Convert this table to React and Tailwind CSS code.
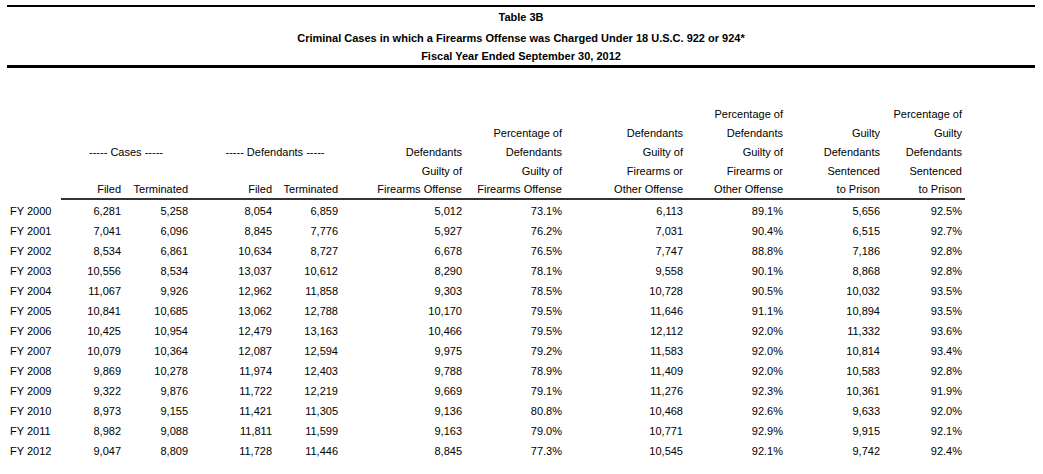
const W = [
  "w-[54px]",
  "w-[63px]",
  "w-[67px]",
  "w-[84px]",
  "w-[66px]",
  "w-[124px]",
  "w-[100px]",
  "w-[121px]",
  "w-[100px]",
  "w-[97px]",
  "w-[82px]",
];

// header stacks, top to bottom; row 3 has the spanning group labels and is drawn on its own
const HEAD_ROWS = [
  ["", "", "", "", "", "", "", "", "Percentage of", "", "Percentage of"],
  ["", "", "", "", "", "", "Percentage of", "Defendants", "Defendants", "Guilty", "Guilty"],
  null,
  ["", "", "", "", "", "Guilty of", "Guilty of", "Firearms or", "Firearms or", "Sentenced", "Sentenced"],
];

const LAST_HEAD = [
  "Filed",
  "Terminated",
  "Filed",
  "Terminated",
  "Firearms Offense",
  "Firearms Offense",
  "Other Offense",
  "Other Offense",
  "to Prison",
  "to Prison",
];

const ROWS = [
  ["FY 2000", "6,281", "5,258", "8,054", "6,859", "5,012", "73.1%", "6,113", "89.1%", "5,656", "92.5%"],
  ["FY 2001", "7,041", "6,096", "8,845", "7,776", "5,927", "76.2%", "7,031", "90.4%", "6,515", "92.7%"],
  ["FY 2002", "8,534", "6,861", "10,634", "8,727", "6,678", "76.5%", "7,747", "88.8%", "7,186", "92.8%"],
  ["FY 2003", "10,556", "8,534", "13,037", "10,612", "8,290", "78.1%", "9,558", "90.1%", "8,868", "92.8%"],
  ["FY 2004", "11,067", "9,926", "12,962", "11,858", "9,303", "78.5%", "10,728", "90.5%", "10,032", "93.5%"],
  ["FY 2005", "10,841", "10,685", "13,062", "12,788", "10,170", "79.5%", "11,646", "91.1%", "10,894", "93.5%"],
  ["FY 2006", "10,425", "10,954", "12,479", "13,163", "10,466", "79.5%", "12,112", "92.0%", "11,332", "93.6%"],
  ["FY 2007", "10,079", "10,364", "12,087", "12,594", "9,975", "79.2%", "11,583", "92.0%", "10,814", "93.4%"],
  ["FY 2008", "9,869", "10,278", "11,974", "12,403", "9,788", "78.9%", "11,409", "92.0%", "10,583", "92.8%"],
  ["FY 2009", "9,322", "9,876", "11,722", "12,219", "9,669", "79.1%", "11,276", "92.3%", "10,361", "91.9%"],
  ["FY 2010", "8,973", "9,155", "11,421", "11,305", "9,136", "80.8%", "10,468", "92.6%", "9,633", "92.0%"],
  ["FY 2011", "8,982", "9,088", "11,811", "11,599", "9,163", "79.0%", "10,771", "92.9%", "9,915", "92.1%"],
  ["FY 2012", "9,047", "8,809", "11,728", "11,446", "8,845", "77.3%", "10,545", "92.1%", "9,742", "92.4%"],
];

function Cell({ i, children }) {
  return (
    <div
      className={`${W[i]} shrink-0 whitespace-nowrap ${i === 0 ? "text-left pl-[3px]" : "text-right pr-[3px]"}`}
    >
      {children}
    </div>
  );
}

export default function App() {
  return (
    <div className="min-h-screen bg-white pl-[7px] pt-[5px] font-['Liberation_Sans',Arial,sans-serif] text-[11px] text-black antialiased">
      <div className="w-[1028px]">
        {/* Title block between the two heavy rules */}
        <div className="border-t-2 border-b-[3px] border-black font-bold text-center">
          <div className="h-[21px] leading-[21px]">Table 3B</div>
          <div className="h-[20px] leading-[20px]">
            Criminal Cases in which a Firearms Offense was Charged Under 18 U.S.C. 922 or 924*
          </div>
          <div className="h-[17px] leading-[17px]">Fiscal Year Ended September 30, 2012</div>
        </div>

        {/* Column headers */}
        <div className="mt-[37px]">
          {HEAD_ROWS.map((row, r) =>
            row ? (
              <div key={r} className="flex h-[19px] leading-[19px]">
                {row.map((t, i) => (
                  <Cell key={i} i={i}>
                    {t}
                  </Cell>
                ))}
              </div>
            ) : (
              <div key={r} className="flex h-[19px] leading-[19px]">
                <Cell i={0} />
                <div className="w-[130px] shrink-0 text-center whitespace-nowrap">----- Cases -----</div>
                <div className="w-[150px] shrink-0 pl-[18px] text-center whitespace-nowrap">
                  ----- Defendants -----
                </div>
                <Cell i={5}>Defendants</Cell>
                <Cell i={6}>Defendants</Cell>
                <Cell i={7}>Guilty of</Cell>
                <Cell i={8}>Guilty of</Cell>
                <Cell i={9}>Defendants</Cell>
                <Cell i={10}>Defendants</Cell>
              </div>
            )
          )}
          <div className="flex">
            <Cell i={0} />
            <div className="flex h-[19px] leading-[17px] border-b-2 border-[#333]">
              {LAST_HEAD.map((t, i) => (
                <Cell key={i} i={i + 1}>
                  {t}
                </Cell>
              ))}
            </div>
          </div>
        </div>

        {/* Data rows */}
        <div className="pt-[1px]">
          {ROWS.map((row) => (
            <div key={row[0]} className="flex h-[20px] leading-[20px]">
              {row.map((v, i) => (
                <Cell key={i} i={i}>
                  {v}
                </Cell>
              ))}
            </div>
          ))}
        </div>
      </div>
    </div>
  );
}
